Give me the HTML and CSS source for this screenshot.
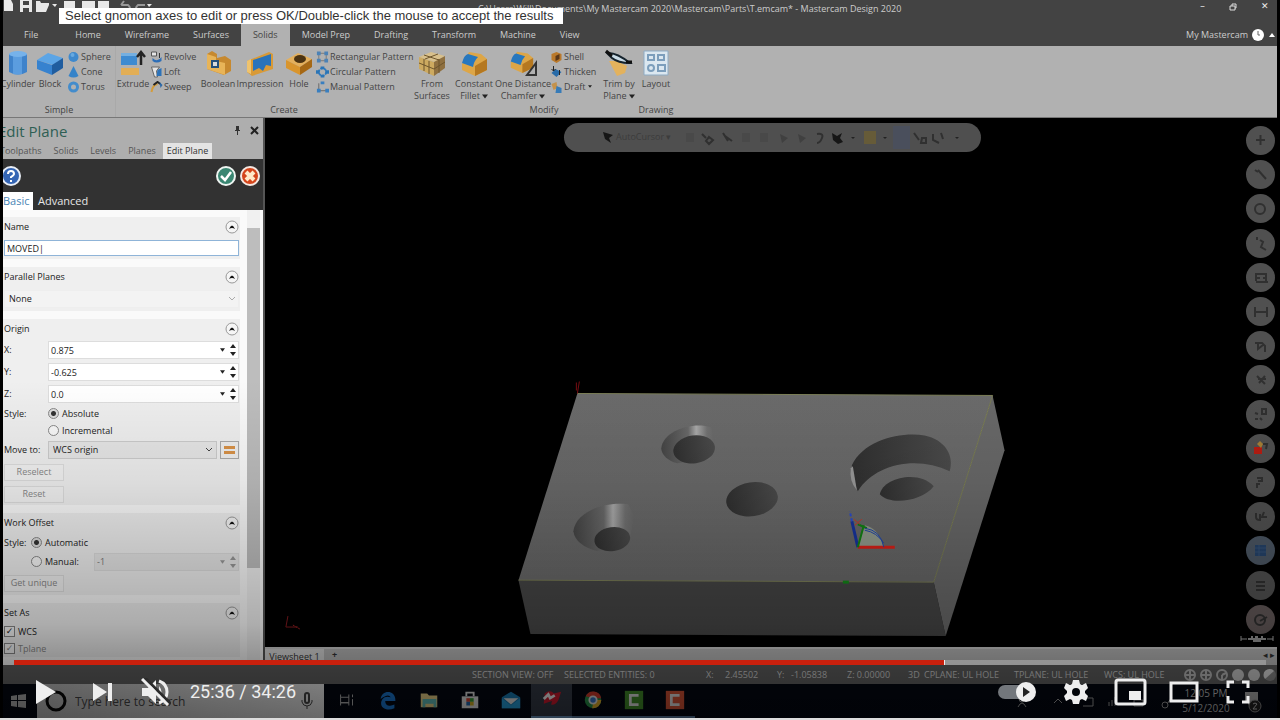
FILE: index.html
```html
<!DOCTYPE html>
<html lang="en">
<head>
<meta charset="utf-8">
<title>Mastercam Design 2020</title>
<link rel="stylesheet" href="styles.css">
</head>
<body>
<svg class="defs" aria-hidden="true">
  <symbol id="cyl" viewBox="0 0 28 28"><path d="M5 5v18q9 5 18 0V5z" fill="#3f83cb"/><path d="M9 5v20q5 1 9 0V5z" fill="#5b9ddf"/><ellipse cx="14" cy="5" rx="9" ry="3" fill="#76b2ea"/></symbol>
  <symbol id="block" viewBox="0 0 28 28"><path d="M1 11 12 4l15 5-10 7z" fill="#5ca5e6"/><path d="M1 11v9l15 6V16z" fill="#3682cf"/><path d="m16 16 11-7v10l-11 7z" fill="#205d9f"/></symbol>
  <symbol id="sphere" viewBox="0 0 12 12"><circle cx="6" cy="6" r="5" fill="#3e89cd"/><circle cx="5" cy="4" r="2" fill="#67a9e0"/></symbol>
  <symbol id="cone" viewBox="0 0 12 12"><path d="M6 0 11 10q-5 3-10 0z" fill="#3583c9"/></symbol>
  <symbol id="torus" viewBox="0 0 12 12"><circle cx="6" cy="6" r="4" fill="none" stroke="#438ccc" stroke-width="3"/></symbol>
  <symbol id="extrude" viewBox="0 0 28 28"><path d="M2 4h16v12H2z" fill="#3e8bd1"/><path d="M2 4h16v3H2z" fill="#75afe0"/><path d="M2 19h18v7H2z" fill="#e2ae56"/><path d="M22 16V5M18 8l4-5 4 5" fill="none" stroke="#222" stroke-width="2.500"/></symbol>
  <symbol id="revolve" viewBox="0 0 12 12"><path d="M1 1h5v4H1z" fill="#e5e5e5" stroke="#555"/><path d="M2 7q5 5 9-1v4q-5 3-9 0z" fill="#2d6eb7"/><path d="M9 2v5" stroke="#333"/></symbol>
  <symbol id="loft" viewBox="0 0 12 12"><path d="M1 1h8L6 5l1 6H4z" fill="#e5e5e5" stroke="#666"/><path d="M7 4l4-2v8H6z" fill="#2c72b8"/></symbol>
  <symbol id="sweep" viewBox="0 0 12 12"><path d="M1 11Q2 4 7 3" fill="none" stroke="#d49c3a" stroke-width="2"/><path d="M3 4 7 1l3 2" fill="none" stroke="#222" stroke-width="2"/><path d="m9 1 3 3-2 3z" fill="#2c68a6"/></symbol>
  <symbol id="boolean" viewBox="0 0 28 28"><path d="M3 5 8 2l5 3v4l8-2 6 4v11l-7 4L3 20z" fill="#c7892f"/><path d="m3 5 9 3v4l9 2v12L3 20z" fill="#e8b458"/><path d="M7 11h8v8H7z" fill="#244f7b"/><path d="M9 13h4v4H9z" fill="#d9d9d9"/></symbol>
  <symbol id="impression" viewBox="0 0 28 28"><path d="m1 12 22-9 4 2v15L6 27l-5-4z" fill="#d99a36"/><path d="m7 11 18-6v12l-5-1-3 6-4-3-6 3z" fill="#2973ba"/><path d="m1 12 4-2v15l-4-2z" fill="#efc36d"/></symbol>
  <symbol id="hole" viewBox="0 0 28 28"><path d="m1 11 12-7 14 6-12 8z" fill="#e4b05c"/><path d="M1 11v8l14 7v-8z" fill="#d9952d"/><path d="m15 18 12-8v8l-12 8z" fill="#a66814"/><ellipse cx="15" cy="10" rx="6" ry="4" fill="#4b3312"/></symbol>
  <symbol id="rect" viewBox="0 0 14 12"><path d="M3 2h8v8H3z" fill="none" stroke="#777"/><path d="M1 0h4v4H1zM9 0h4v4H9zM1 8h4v4H1zM9 8h4v4H9z" fill="#4c82b6"/></symbol>
  <symbol id="circ" viewBox="0 0 14 12"><circle cx="7" cy="6" r="4" fill="none" stroke="#327cbf" stroke-width="2" stroke-dasharray="3 1"/><path d="M5 0h4v3H5zM0 4h4v4H0zM10 4h4v4h-4zM5 9h4v3H5z" fill="#2a75b7"/></symbol>
  <symbol id="manual" viewBox="0 0 14 12"><path d="M3 2v8h8" fill="none" stroke="#666"/><path d="M5 0h4v3H5zM1 8h4v4H1zM10 8h4v4h-4z" fill="#397fc0"/></symbol>
  <symbol id="surfaces" viewBox="0 0 28 28"><path d="m1 8 12-5 14 4-10 6z" fill="#d8c08c"/><path d="M1 8v12l15 7V13z" fill="#cdaa60"/><path d="m16 13 11-6v12l-11 8z" fill="#8f7040"/><path d="m1 14 15 6 11-7M6 10v12M11 12v13M21 10v14M6 6l15 5M20 5 7 10" fill="none" stroke="#6d552c"/></symbol>
  <symbol id="fillet" viewBox="0 0 28 28"><path d="m2 15 7-12 12 2 6 5v11l-12 6L2 21z" fill="#dda647"/><path d="m15 17 12-7v11l-12 6z" fill="#b57820"/><path d="M2 14Q4 6 8 5l10 3q-4 4-5 10z" fill="#2777be"/></symbol>
  <symbol id="shell" viewBox="0 0 12 12"><path d="m1 3 5-2 5 2v6l-5 3-5-3z" fill="#ba792b"/><path d="m5 5 4-2v5l-4 2z" fill="#593719"/></symbol>
  <symbol id="thicken" viewBox="0 0 12 12"><path d="m1 7 4-4 6 3-5 5z" fill="#286ba8"/><path d="M3 0v5M1 3l2 2 2-2M9 4v5" stroke="#222" fill="none"/></symbol>
  <symbol id="draft" viewBox="0 0 12 12"><path d="m1 3 5-2 1 6-4 2z" fill="#c4924c"/><path d="m6 5 5 2v5H5z" fill="#367bb8"/></symbol>
  <symbol id="trim" viewBox="0 0 28 28"><path d="m4 12 8 0 10 5-2 7-8 3z" fill="#e3b25d"/><path d="M2 4q9-1 23 10-12 0-18-5z" fill="#c9dbe6" stroke="#15232d" stroke-width="2"/><path d="m1 2 6 5M21 13h6" stroke="#111" stroke-width="3"/></symbol>
  <symbol id="layout" viewBox="0 0 28 28"><path d="M2 2h24v24H2z" fill="#dbe7f0" stroke="#8eabc4"/><path d="M6 6h6v5H6zM16 6h6v5h-6zM16 16h7v6h-7z" fill="none" stroke="#7c9ebc" stroke-width="2"/><circle cx="9" cy="19" r="3" fill="none" stroke="#7c9ebc" stroke-width="2"/></symbol>
  <symbol id="up" viewBox="0 0 14 14"><circle cx="7" cy="7" r="6" fill="#f5f5f5" stroke="#999"/><path d="M4 9q3-7 6 0-3-2-6 0z" fill="#111"/></symbol>
  <symbol id="down" viewBox="0 0 6 4"><path d="M0 0h6L3 4z" fill="#222"/></symbol>
  <symbol id="spin" viewBox="0 0 6 12"><path d="M0 4 3 0l3 4zM0 8h6l-3 4z" fill="#222"/></symbol>
</svg>

<main class="player">
  <header class="titlebar">
    <svg class="quick" viewBox="0 0 150 13" aria-hidden="true"><g fill="#e8e8e8"><path d="M1 0h7l2 4v7H1zM17 0h12v12H17zM33 1h4l1 2h8v2l-3 7H33zM61 1h11v8H61zM79 1h13v10H79zM95 1h11v10H95z"/><path d="M49 4h5l-2 3zM149 4h-5l2 3z"/></g><path d="M20 1h6v4h-6zM20 8h6v4h-6z" fill="#444"/><g fill="none" stroke="#999" stroke-width="2"><path d="M118 5h7q4 3 0 7M118 5l3-4M142 5h-7q-4 3 0 7"/></g></svg>
    <div class="title">C:\Users\Will\Documents\My Mastercam 2020\Mastercam\Parts\T.emcam* - Mastercam Design 2020</div>
    <div class="window"><button aria-label="Minimize">–</button><button aria-label="Restore"><svg width="8" height="8" viewBox="0 0 8 8"><path d="M1 3h5v4H1zM3 3V1h4v4H6" fill="none" stroke="#ddd"/></svg></button><button aria-label="Close">✕</button></div>
  </header>
  <div class="tip" role="status">Select gnomon axes to edit or press OK/Double-click the mouse to accept the results</div>
  <nav class="tabs">
    <button class="file">File</button><button>Home</button><button>Wireframe</button><button>Surfaces</button><button class="on">Solids</button><button>Model Prep</button><button>Drafting</button><button>Transform</button><button>Machine</button><button>View</button>
    <button class="mine">My Mastercam <svg width="26" height="14" viewBox="0 0 26 14"><circle cx="7" cy="7" r="6" fill="#fff"/><path d="M7 3v4h2" fill="none" stroke="#666"/><path d="m18 9 3-4 3 4z" fill="#fff"/></svg></button>
  </nav>

  <section class="ribbon" aria-label="Solids">
    <div class="group simple">
      <div class="tools">
        <button class="big"><svg><use href="#cyl"/></svg><span>Cylinder</span></button>
        <button class="big"><svg><use href="#block"/></svg><span>Block</span></button>
        <div class="stack"><button><svg><use href="#sphere"/></svg>Sphere</button><button><svg><use href="#cone"/></svg>Cone</button><button><svg><use href="#torus"/></svg>Torus</button></div>
      </div>
      <div class="gname">Simple</div>
    </div>
    <div class="group create">
      <div class="tools">
        <button class="big"><svg><use href="#extrude"/></svg><span>Extrude</span></button>
        <div class="stack"><button><svg><use href="#revolve"/></svg>Revolve</button><button><svg><use href="#loft"/></svg>Loft</button><button><svg><use href="#sweep"/></svg>Sweep</button></div>
        <button class="big"><svg><use href="#boolean"/></svg><span>Boolean</span></button>
        <button class="big"><svg><use href="#impression"/></svg><span>Impression</span></button>
        <button class="big"><svg><use href="#hole"/></svg><span>Hole</span></button>
        <div class="stack"><button><svg><use href="#rect"/></svg>Rectangular Pattern</button><button><svg><use href="#circ"/></svg>Circular Pattern</button><button><svg><use href="#manual"/></svg>Manual Pattern</button></div>
        <button class="big"><svg><use href="#surfaces"/></svg><span>From<br>Surfaces</span></button>
      </div>
      <div class="gname">Create</div>
    </div>
    <div class="group modify">
      <div class="tools">
        <button class="big"><svg><use href="#fillet"/></svg><span>Constant<br>Fillet<svg class="caret"><use href="#down"/></svg></span></button>
        <button class="big"><svg viewBox="0 0 28 28"><use href="#fillet" width="25" height="25"/><path d="M18 26h9V14z" fill="none" stroke="#333" stroke-width="2"/></svg><span>One Distance<br>Chamfer<svg class="caret"><use href="#down"/></svg></span></button>
        <div class="stack"><button><svg><use href="#shell"/></svg>Shell</button><button><svg><use href="#thicken"/></svg>Thicken</button><button><svg><use href="#draft"/></svg>Draft <svg class="caret dot"><use href="#down"/></svg></button></div>
        <button class="big"><svg><use href="#trim"/></svg><span>Trim by<br>Plane<svg class="caret"><use href="#down"/></svg></span></button>
      </div>
      <div class="gname">Modify</div>
    </div>
    <div class="group drawing">
      <div class="tools"><button class="big"><svg><use href="#layout"/></svg><span>Layout</span></button></div>
      <div class="gname">Drawing</div>
    </div>
  </section>

  <div class="work">
    <aside class="panel">
      <div class="phead"><h1>Edit Plane</h1><button aria-label="Pin"><svg width="7" height="9" viewBox="0 0 7 9"><path d="M2 0h3v4h1v1H1V4h1zM3 5h1v4H3z" fill="#333"/></svg></button><button aria-label="Close panel"><svg width="9" height="9" viewBox="0 0 9 9"><path d="m1 1 7 7M8 1 1 8" stroke="#222" stroke-width="2"/></svg></button></div>
      <nav class="ptabs"><button>Toolpaths</button><button>Solids</button><button>Levels</button><button>Planes</button><button class="on">Edit Plane</button></nav>
      <div class="dark">
        <div class="acts">
          <button class="help" aria-label="Help"><svg viewBox="0 0 20 20"><circle cx="10" cy="10" r="9" fill="#3465b4" stroke="#e9eef6" stroke-width="2"/><path d="M7 8q0-3 3-3t3 3q0 1-3 3v1M10 14v2" fill="none" stroke="#fff" stroke-width="2"/></svg></button>
          <button aria-label="OK"><svg viewBox="0 0 20 20"><circle cx="10" cy="10" r="9" fill="#3a8672" stroke="#eef4f1" stroke-width="2"/><path d="m5 10 4 4 6-8" fill="none" stroke="#fff" stroke-width="2.500"/></svg></button>
          <button aria-label="Cancel"><svg viewBox="0 0 20 20"><circle cx="10" cy="10" r="9" fill="#d4451b" stroke="#f5e8e2" stroke-width="2"/><path d="m6 6 8 8M14 6l-8 8" stroke="#ffe9c9" stroke-width="4"/></svg></button>
        </div>
        <div class="modes"><button class="on">Basic</button><button>Advanced</button></div>
      </div>
      <div class="pbody">
        <form class="form">
          <section><header><label for="nm">Name</label><button type="button" aria-label="Collapse Name"><svg><use href="#up"/></svg></button></header>
            <div class="row"><input id="nm" class="name" value="MOVED|"></div></section>
          <section><header><label for="pp">Parallel Planes</label><button type="button" aria-label="Collapse Parallel Planes"><svg><use href="#up"/></svg></button></header>
            <div class="row tall field"><select id="pp" class="flat"><option>None</option></select><svg class="chev" viewBox="0 0 6 4"><path d="m0 0 3 3 3-3" fill="none" stroke="#aaa"/></svg></div></section>
          <section><header><span>Origin</span><button type="button" aria-label="Collapse Origin"><svg><use href="#up"/></svg></button></header>
            <div class="row axis"><label for="ox">X:</label><div class="field"><input id="ox" value="0.875"><svg class="dn"><use href="#down"/></svg><svg class="sp"><use href="#spin"/></svg></div></div>
            <div class="row axis"><label for="oy">Y:</label><div class="field"><input id="oy" value="-0.625"><svg class="dn"><use href="#down"/></svg><svg class="sp"><use href="#spin"/></svg></div></div>
            <div class="row axis"><label for="oz">Z:</label><div class="field"><input id="oz" value="0.0"><svg class="dn"><use href="#down"/></svg><svg class="sp"><use href="#spin"/></svg></div></div>
            <div class="row axis short"><span>Style:</span><label class="opt"><input type="radio" name="st" checked>Absolute</label></div>
            <div class="row axis short"><span></span><label class="opt"><input type="radio" name="st">Incremental</label></div>
            <div class="row move"><label for="mv">Move to:</label><div class="field"><select id="mv"><option>WCS origin</option></select><svg class="chev" viewBox="0 0 6 4"><path d="m0 0 3 3 3-3" fill="none" stroke="#444"/></svg></div><button type="button" class="eq" aria-label="Pick origin"><i></i><i></i></button></div>
            <div class="row"><button type="button" class="push" disabled>Reselect</button></div>
            <div class="row"><button type="button" class="push" disabled>Reset</button></div></section>
          <section><header><span>Work Offset</span><button type="button" aria-label="Collapse Work Offset"><svg><use href="#up"/></svg></button></header>
            <div class="row offs"><span>Style:</span><label class="opt"><input type="radio" name="wo" checked>Automatic</label></div>
            <div class="row offs"><span></span><label class="opt"><input type="radio" name="wo">Manual:</label><div class="field off"><input aria-label="Manual offset" value="-1" disabled><svg class="dn"><use href="#down"/></svg><svg class="sp"><use href="#spin"/></svg></div></div>
            <div class="row tall"><button type="button" class="push" disabled>Get unique</button></div></section>
          <section><header><span>Set As</span><button type="button" aria-label="Collapse Set As"><svg><use href="#up"/></svg></button></header>
            <div class="row short"><label class="opt"><input type="checkbox" checked>WCS</label></div>
            <div class="row short dim"><label class="opt"><input type="checkbox" checked>Tplane</label></div></section>
        </form>
        <div class="scroll"><div class="thumb"></div></div>
      </div>
    </aside>

    <div class="stage">
      <div class="view">
        <svg class="model" viewBox="265 118 1012 530" role="img" aria-label="Machined plate with holes">
          <defs>
            <linearGradient id="top" x1="0" y1="0" x2="0" y2="1"><stop offset="0" stop-color="#6b6b6b"/><stop offset="1" stop-color="#676767"/></linearGradient>
            <linearGradient id="sink" x1="0" x2="1"><stop offset="0" stop-color="#454545"/><stop offset=".5" stop-color="#696969"/><stop offset=".65" stop-color="#aaa"/><stop offset=".85" stop-color="#727272"/><stop offset="1" stop-color="#686868"/></linearGradient>
            <linearGradient id="bore" x1="0" x2="1"><stop offset="0" stop-color="#303030"/><stop offset="1" stop-color="#4b4b4b"/></linearGradient>
          </defs>
          <path d="M577 394 993 396 934 583 518 581z" fill="url(#top)"/>
          <path d="M518 581 934 583 946 637 530 635z" fill="#454545"/>
          <path d="m993 396 12 55-59 186-12-54z" fill="#686868"/>
          <path d="M577 394 993 396 934 583 518 581" fill="none" stroke="#7c8058"/>
          <path d="M661 449c2-18 32-27 50-21l4 14-5 18-33 4q-15-5-16-15z" fill="url(#sink)"/>
          <ellipse cx="694" cy="450" rx="21" ry="14" transform="rotate(-8 694 450)" fill="url(#bore)"/>
          <path d="M573 532c2-18 28-30 55-27l6 12-5 25-32 10q-22-6-24-20z" fill="url(#sink)"/>
          <ellipse cx="612" cy="540" rx="18" ry="12" transform="rotate(-8 612 540)" fill="url(#bore)"/>
          <ellipse cx="752" cy="500" rx="26" ry="17" transform="rotate(-8 752 500)" fill="url(#bore)"/>
          <path d="M852 466c12-26 50-34 73-30 20 4 30 20 25 36-32-16-75-8-92 20q-6-12-6-26z" fill="url(#bore)"/>
          <path d="M851 469q-2 13 6 22l-4-24z" fill="#999"/>
          <path d="M880 495c3-17 40-25 54-8-12 16-45 19-54 8z" fill="url(#bore)"/>
          <path d="m858 548 7-22q14 3 19 22z" fill="#929b8d"/>
          <path d="M858 548h37" stroke="#d92118" stroke-width="3"/><path d="m858 548-6-26" stroke="#17349e" stroke-width="3"/><path d="m852 522-2-10" stroke="#2a4bd0" stroke-width="2" stroke-dasharray="3 2"/><path d="m858 548 6-22m-6-1 9 4" fill="none" stroke="#128213" stroke-width="2"/><path d="M865 529q16 2 19 19M865 531q12 2 19 13" fill="none" stroke="#2246a9" stroke-width="1"/><path d="m854 520 6 5m-5 1 7-6" stroke="#c53b2a"/>
          <path d="m577 394 2-12m-3 1v8" stroke="#750d12"/><path d="M843 583h6" stroke="#138719" stroke-width="3"/>
          <path d="m287 617-2 11h12" fill="none" stroke="#84191e"/><path d="m292 626 7 4" stroke="#a02020" stroke-dasharray="2 1"/>
        </svg>
        <div class="pill"><svg viewBox="564 123 417 30" aria-hidden="true"><g fill="none" stroke="#303030" stroke-width="2"><path d="M702 134l4 4m3-1 4 3-4 4-3-3zM723 133l5 8m-3-5 7 5M817 134q7-1 5 4t-5 5"/><path d="m914 133 5 7m3-2h4v5h-5zM933 134v6l6 3m2-10 2 6"/></g><path d="M686 133h8v9h-8zM742 133h8v9h-8zM760 133h8v9h-8z" fill="#494949"/><path d="m780 134 8 4-6 5zM798 134l8 4-6 5z" fill="#404040"/><path d="m603 132 10 3-4 3 2 5-6-4zM832 133l5 3 5-3-2 5 3 4-5 2-5-4z" fill="#161616"/><path d="M851 137h4l-2 2zM883 137h4l-2 2zM955 137h4l-2 2z" fill="#222"/><path d="M864 131h12v13h-12z" fill="#665b38"/><path d="M893 126h17v23h-17z" fill="#4a4f5c"/></svg><span>AutoCursor ▾</span></div>
        <div class="rail">
          <button aria-label="Points"><svg viewBox="0 0 29 29"><path d="M14.500 9v10M10 14h9" class="k"/></svg></button>
          <button aria-label="Lines"><svg viewBox="0 0 29 29"><path d="m9 10 3 2m0-2 8 9" class="k"/></svg></button>
          <button aria-label="Arcs"><svg viewBox="0 0 29 29"><circle cx="14" cy="15" r="5" class="k"/></svg></button>
          <button aria-label="Splines"><svg viewBox="0 0 29 29"><path d="M11 8v3m3 0 3 2-2 5 5 3" class="k"/></svg></button>
          <button aria-label="Solids"><svg viewBox="0 0 29 29"><path d="M9 11h12M10 19h12M11 15h3m3 0h3M10 12v6m10-6v6" class="k"/></svg></button>
          <button aria-label="Dimensions"><svg viewBox="0 0 29 29"><path d="M9 10v10m12-10v10M9 15h12" class="k"/></svg></button>
          <button aria-label="Surfaces"><svg viewBox="0 0 29 29"><path d="M9 12h7l3 3v6M12 11v7l5-4" class="k"/></svg></button>
          <button aria-label="Wireframe"><svg viewBox="0 0 29 29"><path d="m11 11 8 8m0-8-6 7m-1-4h8" class="k"/></svg></button>
          <button aria-label="Toggle"><svg viewBox="0 0 29 29"><path d="M16 9h4v5h-4zM9 19h3m2-1 2 2m-7-7 3 1" class="k"/></svg></button>
          <button aria-label="Colour"><svg viewBox="0 0 29 29"><path d="M8 13h8v7H8z" fill="#b71d12"/><path d="m11 10 3-3 3 3-2 4z" fill="#a78036"/><path d="M17 10h4l-1 5" class="k"/></svg></button>
          <button aria-label="Group"><svg viewBox="0 0 29 29"><path d="M11 10h5v3h-4m2 3h-3v4" class="k"/></svg></button>
          <button aria-label="Plane"><svg viewBox="0 0 29 29"><path d="M10 11v4q0 3 4 3v-6m4-2-2 5h5" class="k"/></svg></button>
          <button aria-label="Level" class="blue"><svg viewBox="0 0 29 29"><path d="M9 9h11v11H9z" fill="#25436a"/><path d="M9 12h11M9 16h11M13 9v11" stroke="#365377"/></svg></button>
          <button aria-label="Grid"><svg viewBox="0 0 29 29"><path d="M10 11h9M10 15h9M10 19h9" class="k"/></svg></button>
          <button aria-label="Rotate" class="rose"><svg viewBox="0 0 29 29"><circle cx="14" cy="15" r="5" class="k"/><path d="m14 16 7-4" class="k"/></svg></button>
        </div>
        <svg class="scale" viewBox="0 0 34 8" aria-hidden="true"><path d="M1 2v5M33 2v5M1 5h6m20 0h6" stroke="#aaa"/><path d="M8 4h3V2h2v2h2V2h3v2h3V2h2v2h3v2h-5v2h-8V6H8z" fill="#999"/></svg>
      </div>
      <div class="sheets"><button>Viewsheet 1</button><b>+</b><em>◂ ▸</em></div>
    </div>
  </div>

  <footer class="status"><span class="sv">SECTION VIEW: OFF</span><span class="se">SELECTED ENTITIES: 0</span><span class="x">X:</span><span class="n">2.45502</span><span class="y">Y:</span><span class="n">-1.05838</span><span class="z">Z: 0.00000</span><span class="d">3D</span><span class="p">CPLANE: UL HOLE</span><span class="p">TPLANE: UL HOLE</span><span class="w">WCS: UL HOLE</span>
    <svg viewBox="0 0 94 14" aria-hidden="true"><g fill="none" stroke="#bbb" stroke-width="2"><circle cx="7" cy="7" r="5"/><path d="M7 2v10M2 7h10"/><circle cx="23" cy="7" r="5"/><path d="M23 2v10M18 7h10"/><circle cx="39" cy="7" r="5"/><path d="M39 7v5m0-5 4-2"/></g><circle cx="55" cy="7" r="6" fill="#ccc"/><circle cx="71" cy="7" r="6" fill="#ccc"/><circle cx="87" cy="7" r="6" fill="#888"/><path d="M82 11a6 6 0 0 1 9-8z" fill="#ddd"/></svg></footer>

  <div class="task">
    <button class="start" aria-label="Start"><svg width="15" height="14" viewBox="0 0 15 14"><path d="m0 2 6-1v5H0zM7 1l8-1v6H7zM0 7h6v6l-6-1zM7 7h8v7l-8-1z" fill="#aaa"/></svg></button>
    <label class="search"><svg width="22" height="22" viewBox="0 0 22 22"><circle cx="11" cy="11" r="9" fill="none" stroke="#080808" stroke-width="3"/></svg><input placeholder="Type here to search" aria-label="Type here to search"><svg width="12" height="18" viewBox="0 0 12 18"><rect x="4" y="1" width="4" height="10" rx="2" fill="none" stroke="#444" stroke-width="2"/><path d="M1 8v2q1 4 5 4t5-4V8M6 14v3" fill="none" stroke="#444"/></svg></label>
    <div class="apps">
      <button aria-label="Task View"><svg viewBox="0 0 24 24"><path d="M5 6v3h9V6M5 18v-3h9v3M5 9v6h9V9M18 6v3m0 2v7" fill="none" stroke="#bbb"/></svg></button>
      <button aria-label="Edge"><svg viewBox="0 0 24 24"><path d="M4 11C5 0 21 1 20 13H9c0 6 6 6 10 4v4C9 25 1 19 6 11q3-4 9-2-2-3-6-1-3 1-5 3z" fill="#1973c9"/></svg></button>
      <button aria-label="File Explorer"><svg viewBox="0 0 24 24"><path d="M3 5h7l2 2h9v13H3z" fill="#e4cd84"/><path d="M5 11h15v9h-3v-4H8v4H5z" fill="#5fb8b4"/></svg></button>
      <button aria-label="Store"><svg viewBox="0 0 24 24"><path d="M8 8V4h8v4" fill="none" stroke="#ddd" stroke-width="2"/><path d="M3 8h18v13H3z" fill="#ddd"/><path d="M8 10h4v4H8z" fill="#c43"/><path d="M12 10h4v4h-4z" fill="#393"/><path d="M8 14h4v4H8z" fill="#26a"/><path d="M12 14h4v4h-4z" fill="#ca2"/></svg></button>
      <button aria-label="Mail"><svg viewBox="0 0 24 24"><path d="m2 9 10-6 10 6v12H2z" fill="#1878af"/><path d="m4 10h16l-8 7z" fill="#ddd"/><path d="m2 10 10 8 10-8v11H2z" fill="#249ad4"/></svg></button>
      <button class="sel" aria-label="Mastercam"><svg viewBox="0 0 24 24"><path d="M4 5q6-5 10 0l8-2-3 9q-3 6-8 5l1-4-9 3z" fill="#c9192d"/><path d="m3 11 5-5 2 4 5-3" fill="none" stroke="#eee" stroke-width="3"/></svg></button>
      <button class="run" aria-label="Chrome"><svg viewBox="0 0 24 24"><circle cx="12" cy="12" r="9" fill="#278c46"/><path d="M4 8a9 9 0 0 1 17 2h-9z" fill="#cd382b"/><path d="M13 12h8a9 9 0 0 1-10 9z" fill="#dba929"/><circle cx="12" cy="12" r="4" fill="#3674c4" stroke="#ddd" stroke-width="2"/></svg></button>
      <button class="run" aria-label="Camtasia"><svg viewBox="0 0 24 24"><path d="M2 2h20v20H2z" fill="#408929"/><path d="M17 7H8v10h9" fill="none" stroke="#ddd" stroke-width="3"/></svg></button>
      <button class="run" aria-label="Camtasia Recorder"><svg viewBox="0 0 24 24"><path d="M2 2h20v20H2z" fill="#d05134"/><path d="M17 7H8v10h9" fill="none" stroke="#ddd" stroke-width="3"/></svg></button>
    </div>
    <svg class="tray" viewBox="0 0 160 16" aria-hidden="true"><g fill="none" stroke="#999"><circle cx="6" cy="5" r="3"/><path d="M2 13q4-8 8 0M38 9l4-4 4 4M67 4h10v8H67M93 12V8m3 4V6m3 6V3M118 6h9v6h-9zM151 10l5-7"/><circle cx="149" cy="11" r="3"/></g></svg>
    <div class="clock">12:05 PM<br>5/12/2020</div>
    <svg class="note" viewBox="0 0 20 22" aria-hidden="true"><path d="M1 1h13v10H7l-3 3v-3H1z" fill="#aaa"/><circle cx="11" cy="15" r="6" fill="#222" stroke="#888"/><path d="M9 13q2-2 4 0l-4 5h4" fill="none" stroke="#bbb"/></svg>
  </div>

  <div class="shade"></div>
  <div class="controls">
    <div class="seek" role="progressbar" aria-label="Playback" aria-valuenow="74"><div class="played" style="width:74.4%"></div></div>
    <div class="bar">
      <button class="play" aria-label="Play"><svg viewBox="0 0 20 24"><path d="m0 0 20 12L0 24z"/></svg></button>
      <button class="next" aria-label="Next"><svg viewBox="0 0 19 20"><path d="m0 1 14 9-14 9zM15 1h4v18h-4z"/></svg></button>
      <button class="mute" aria-label="Unmute"><svg viewBox="0 0 30 28"><path d="M1 10h6l8-8v24l-8-8H1z"/><path d="M18 8q5 6 0 12z"/><path d="M18 3q8 3 8 11t-8 11" fill="none" stroke="#eee" stroke-width="3"/><path d="m4 0 26 26" stroke="#2b2b2b" stroke-width="3"/><path d="m1 1 26 26" stroke="#eee" stroke-width="3"/></svg></button>
      <time>25:36 / 34:26</time>
      <button class="auto" aria-label="Autoplay"><svg viewBox="0 0 38 24"><rect x="0" y="5" width="30" height="14" rx="7" fill="#73777c"/><circle cx="28" cy="12" r="10"/><path d="m25 7 7 5-7 5z" fill="#222"/></svg></button>
      <button class="gear" aria-label="Settings"><svg viewBox="0 0 24 26"><path fill-rule="evenodd" d="M9 1h6l1 4 2 1 4-2 2 5-3 3v2l3 3-2 5-4-2-2 1-1 4H9l-1-4-2-1-4 2-2-5 3-3v-2L0 9l2-5 4 2 2-1zM12 9a4 4 0 1 0 0 8 4 4 0 0 0 0-8z"/></svg></button>
      <button class="mini" aria-label="Miniplayer"><svg viewBox="0 0 33 28"><rect x="2" y="2" width="29" height="24" rx="2" fill="none" stroke="#eee" stroke-width="3"/><path d="M15 13h12v9H15z"/></svg></button>
      <button class="wide" aria-label="Theater mode"><svg viewBox="0 0 30 22"><path d="M2 2h26v18H2z" fill="none" stroke="#eee" stroke-width="3"/></svg></button>
      <button class="full" aria-label="Full screen"><svg viewBox="0 0 24 24"><path d="M2 8V2h6m8 0h6v6M2 16v6h6m8 0h6v-6" fill="none" stroke="#eee" stroke-width="3"/></svg></button>
    </div>
  </div>
</main>
</body>
</html>
```
FILE: styles.css
```css
* { box-sizing: border-box; }
body { margin: 0; background: #000; color: #222; font: 9px/12px "Open Sans", "Noto Sans", sans-serif; }
button, input, select { font: inherit; color: inherit; margin: 0; }
button { border: 0; padding: 0; background: none; white-space: nowrap; }
svg { display: block; flex: none; }
.defs { position: absolute; width: 0; height: 0; }
.player { position: relative; display: flex; flex-direction: column; min-height: 100vh; padding: 0 3px; border-bottom: 2px solid #ddd; overflow: hidden; }

.titlebar { display: flex; height: 24px; background: #434343; color: #ccc; }
.quick { width: 150px; height: 13px; }
.title { flex: 1; padding-left: 325px; line-height: 18px; font-size: 9px; white-space: nowrap; }
.window { display: flex; gap: 22px; height: 12px; padding-right: 8px; }
.window button { width: 9px; font-size: 9px; color: #eee; }
.window svg { margin-top: 2px; }
.tip { position: absolute; left: 59px; top: 8px; padding: 0 10px 0 6px; background: #fff; color: #333; font: 13px/16px "Liberation Sans", Arial, sans-serif; white-space: nowrap; }
.tabs { display: flex; height: 22px; background: #434343; color: #ccc; }
.tabs button { padding: 0 12px; }
.tabs .file { padding: 0 25px 0 21px; }
.tabs .on { background: #b1b1b1; color: #444; }
.tabs .mine { display: flex; align-items: center; gap: 3px; margin-left: auto; padding: 0; }

.ribbon { display: flex; height: 72px; background: #b1b1b1; color: #444; border-bottom: 1px solid #777; overflow: hidden; }
.group { display: flex; flex-direction: column; }
.simple { width: 113px; border-right: 1px solid #a9a9a9; }
.create { width: 336px; }
.modify { width: 184px; }
.drawing { width: 40px; }
.tools { display: grid; flex: 1; }
.simple .tools { grid-template-columns: 30px 34px 1fr; }
.create .tools { grid-template-columns: 34px 48px 40px 44px 34px 96px 1fr; }
.modify .tools { grid-template-columns: 44px 54px 52px 1fr; }
.drawing .tools { grid-template-columns: 1fr; }
.big { display: flex; flex-direction: column; align-items: center; padding-top: 3px; line-height: 12px; min-width: 0; }
.big > svg { width: 28px; height: 28px; }
.big > span { padding-top: 1px; }
.caret { display: inline-block; width: 6px; height: 5px; margin-left: 2px; }
.stack { display: flex; flex-direction: column; padding-top: 3px; }
.stack button { display: flex; align-items: center; gap: 1px; height: 15px; }
.stack button > svg:first-child { width: 13px; height: 12px; }
.stack .dot { width: 4px; height: 3px; }
.gname { height: 14px; text-align: center; line-height: 13px; }

.work { display: flex; flex: 1; }
.panel { display: flex; flex-direction: column; width: 262px; border-right: 2px solid #555; background: #fff; overflow: hidden; }
.phead { display: flex; align-items: center; gap: 9px; height: 25px; padding-right: 4px; background: #aeaeae; }
.phead h1 { flex: 1; margin: 0 0 0 -5px; font-size: 15px; line-height: 24px; font-weight: 400; color: #2e5f54; }
.ptabs { display: flex; gap: 12px; height: 16px; background: #aeaeae; color: #555; white-space: nowrap; }
.ptabs button { line-height: 16px; }
.ptabs button:first-child { margin-left: -3px; }
.ptabs .on { margin-left: -5px; padding: 0 4px; background: #e4e4e4; color: #333; }
.dark { background: #323232; color: #e6e6e6; }
.acts { display: flex; align-items: center; gap: 4px; height: 33px; padding-right: 3px; }
.acts svg { width: 20px; height: 20px; }
.help { margin: 0 auto 0 -2px; }
.modes { display: flex; height: 18px; font-size: 11px; }
.modes button { padding: 0 5px; line-height: 18px; }
.modes .on { width: 30px; padding: 0 4px 0 0; background: #fff; color: #4a85b5; }
.pbody { display: flex; flex: 1; padding-right: 3px; background: #fafafa; }
.form { display: flex; flex: 1; flex-direction: column; gap: 8px; padding: 7px 7px 0 0; }
.form section { background: #efefef; }
.form header { display: flex; align-items: center; justify-content: space-between; height: 20px; padding: 0 1px; }
.form header svg { width: 14px; height: 14px; }
.row { display: flex; align-items: center; height: 22px; padding: 0 1px; }
.tall { height: 24px; }
.short { height: 17px; }
.axis { display: grid; grid-template-columns: 44px 1fr; }
.row .name { width: 100%; height: 16px; padding: 0 2px; border: 1px solid #8fb4d8; background: #fff; }
.field { position: relative; flex: 1; }
.field input, .field select { display: block; width: 100%; height: 18px; padding: 0 2px; border: 1px solid #ddd; background: #fff; appearance: none; border-radius: 0; }
.field select { background: #e6e6e6; border-color: #ccc; padding-left: 4px; }
.field .flat { border-color: #eee; background: #f3f3f3; }
.chev { position: absolute; right: 5px; top: 7px; width: 6px; height: 4px; }
.flat + .chev { top: 10px; }
.dn { position: absolute; right: 14px; top: 7px; width: 5px; height: 4px; }
.sp { position: absolute; right: 3px; top: 3px; width: 6px; height: 12px; }
.opt { display: flex; align-items: center; gap: 3px; }
.opt input { display: grid; place-items: center; appearance: none; width: 11px; height: 11px; border: 1px solid #888; background: #f8f8f8; }
.opt input[type="radio"] { border-radius: 50%; }
.opt input[type="radio"]:checked { background: radial-gradient(circle, #333 0 2px, #ddd 3px); }
.opt input[type="checkbox"]:checked::before { content: "✓"; font: 9px/9px "DejaVu Sans", sans-serif; }
.move { gap: 3px; }
.move label { width: 41px; white-space: nowrap; }
.eq { display: grid; gap: 2px; align-content: center; justify-content: center; width: 19px; height: 18px; border: 1px solid #aaa; background: #eee; }
.eq i { width: 11px; height: 3px; background: #d89248; }
.push { width: 60px; height: 17px; border: 1px solid #ddd; background: #f2f2f2; color: #888; }
.offs { height: 19px; gap: 3px; }
.offs > span { width: 24px; }
.offs .opt { width: 60px; }
.field.off input { background: #e6e6e6; color: #777; }
.off svg { opacity: .4; }
.dim { color: #888; }
.scroll { width: 13px; padding-top: 18px; background: #f0f0f0; }
.thumb { height: 340px; background: #bdbdbd; }

.stage { display: flex; flex: 1; flex-direction: column; background: #000; min-width: 0; }
.view { position: relative; flex: 1; }
.model { position: absolute; inset: 0; width: 100%; height: 100%; }
.pill { position: absolute; left: 50%; top: 5px; width: 417px; height: 29px; margin-left: -207px; border-radius: 15px; background: #4f4f4f; color: #3c3c3c; }
.pill span { position: absolute; left: 52px; top: 8px; }
.rail { position: absolute; right: 2px; top: 8px; bottom: 13px; display: flex; flex-direction: column; justify-content: space-between; }
.rail button { width: 29px; height: 29px; border-radius: 50%; background: #505050; }
.rail .blue { background: #4b5663; }
.rail .rose { background: #625858; }
.k { fill: none; stroke: #303030; stroke-width: 2; }
.scale { position: absolute; right: 3px; bottom: 5px; width: 34px; height: 8px; }
.sheets { display: flex; height: 18px; background: #bcbcbc; border-top: 2px solid #d0d0d0; color: #333; }
.sheets button { width: 59px; background: #ddd; line-height: 15px; height: 15px; }
.sheets b { margin-left: 8px; }
.sheets em { margin: 0 2px 0 auto; font-style: normal; }

.status { display: flex; align-items: center; justify-content: flex-end; height: 19px; background: #606060; color: #cfcfcf; white-space: nowrap; }
.status span { flex: none; }
.sv { width: 92px; } .se { width: 142px; } .x { width: 19px; } .n { width: 52px; } .y { width: 14px; } .z { width: 61px; } .d { width: 16px; } .p { width: 90px; } .w { width: 79px; }
.status .n + .z { margin-left: 4px; }
.status svg { width: 94px; height: 14px; }

.task { display: flex; height: 34px; background: #030711; color: #bbb; }
.start { display: grid; place-items: center; width: 34px; padding-right: 4px; }
.search { display: flex; align-items: center; width: 287px; padding: 0 11px 0 8px; background: linear-gradient(90deg, #b8b8b8, #e8e8e8); }
.search input { flex: 1; min-width: 0; padding: 0 8px; border: 0; background: none; font-size: 12px; }
.search input::placeholder { color: #444; opacity: 1; }
.apps { display: flex; flex: 1; padding-left: 2px; }
.apps button { display: grid; place-items: center; width: 41px; border-bottom: 2px solid transparent; }
.apps svg { width: 22px; height: 22px; }
.apps .sel { background: #333945; border-color: #6a94bd; }
.apps .run { border-color: #587a9c; }
.tray { width: 160px; height: 16px; margin-top: 10px; }
.clock { width: 60px; padding-top: 2px; text-align: center; line-height: 15px; font-size: 10px; }
.note { width: 20px; height: 22px; margin: 7px 13px 0 8px; }

.shade { position: absolute; inset: 380px 0 0; pointer-events: none; background: linear-gradient(transparent, rgba(0,0,0,.08) 30%, rgba(0,0,0,.28) 72%, rgba(0,0,0,.42) 85%, rgba(0,0,0,.55)); }
.controls { position: absolute; left: 0; right: 0; bottom: 0; color: #eee; }
.seek { height: 5px; margin: 0 14px; background: rgba(255,255,255,.25); }
.played { height: 5px; background: #c9200d; border-right: 1px solid #eee; }
.bar { display: flex; align-items: center; height: 53px; padding: 0 30px 0 36px; }
.bar svg { width: 100%; height: 100%; fill: #eee; }
.play { width: 20px; height: 24px; margin-right: 37px; }
.next { width: 19px; height: 20px; margin-right: 29px; }
.mute { width: 30px; height: 28px; margin-right: 19px; }
.bar time { font: 18px/24px Roboto, sans-serif; }
.auto { width: 38px; height: 24px; margin-left: auto; }
.gear { width: 24px; height: 26px; margin-left: 28px; }
.mini { width: 33px; height: 28px; margin-left: 26px; }
.wide { width: 30px; height: 22px; margin-left: 22px; }
.full { width: 24px; height: 24px; margin-left: 27px; }
```
